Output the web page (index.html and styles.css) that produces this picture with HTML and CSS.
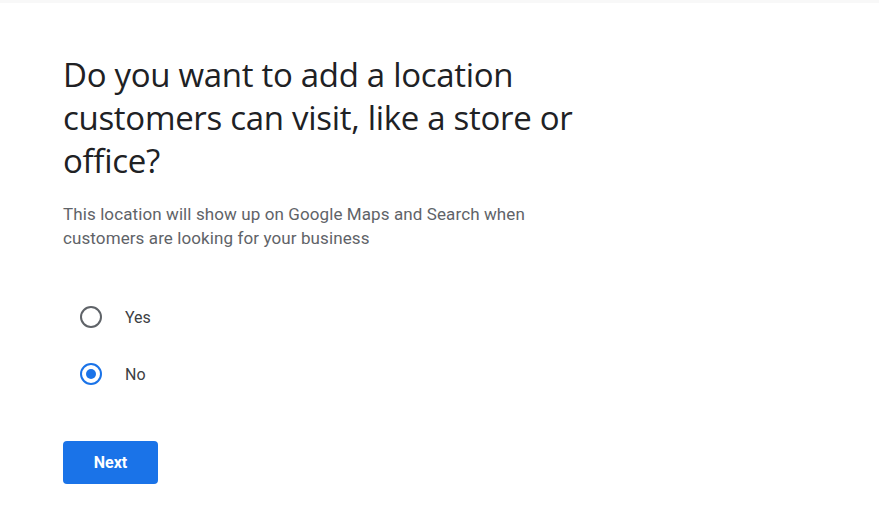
FILE: index.html
```html
<!DOCTYPE html>
<html lang="en">
<head>
  <meta charset="UTF-8">
  <title>Add location</title>
  <link rel="stylesheet" href="styles.css">
</head>
<body>

  <div class="top-shade"></div>

  <div class="step">
    <h1>Do you want to add a location customers can visit, like a store or office?</h1>
    <p class="hint">This location will show up on Google Maps and Search when customers are looking for your business</p>

    <div class="choices">
      <label class="choice">
        <span class="radio"></span>
        <span class="choice-text">Yes</span>
      </label>
      <label class="choice">
        <span class="radio checked"></span>
        <span class="choice-text">No</span>
      </label>
    </div>

    <button class="next-btn">Next</button>
  </div>

</body>
</html>
```

FILE: styles.css
```css
body {
  margin: 0;
  background: #fff;
  font-family: Roboto, Arial, sans-serif;
  color: #202124;
}

.top-shade {
  height: 3px;
  background: #f8f8f8;
}

.step {
  padding: 50px 0 0 63px;
  width: 530px;
}

h1 {
  font-family: "Open Sans", Roboto, sans-serif;
  font-weight: 400;
  font-size: 33px;
  line-height: 43px;
  letter-spacing: -0.3px;
  margin: 0;
  color: #202124;
}

.hint {
  font-size: 17px;
  line-height: 24px;
  letter-spacing: 0.1px;
  color: #5f6368;
  margin: 20px 0 0;
}

.choices {
  margin-top: 56px;
  display: flex;
  flex-direction: column;
  gap: 35px;
}

.choice {
  display: flex;
  align-items: center;
  gap: 23px;
  padding-left: 17px;
  height: 22px;
  font-size: 16px;
  color: #3c4043;
}

.radio {
  width: 18px;
  height: 18px;
  border: 2px solid #5f6368;
  border-radius: 50%;
  box-sizing: content-box;
  display: flex;
  align-items: center;
  justify-content: center;
}

.radio.checked {
  border-color: #1a73e8;
}

.radio.checked::after {
  content: "";
  width: 10px;
  height: 10px;
  border-radius: 50%;
  background: #1a73e8;
}

.next-btn {
  margin-top: 56px;
  width: 95px;
  height: 43px;
  background: #1a73e8;
  color: #fff;
  border: none;
  border-radius: 4px;
  font-family: Roboto, Arial, sans-serif;
  font-size: 16px;
  font-weight: bold;
  cursor: pointer;
}
```
